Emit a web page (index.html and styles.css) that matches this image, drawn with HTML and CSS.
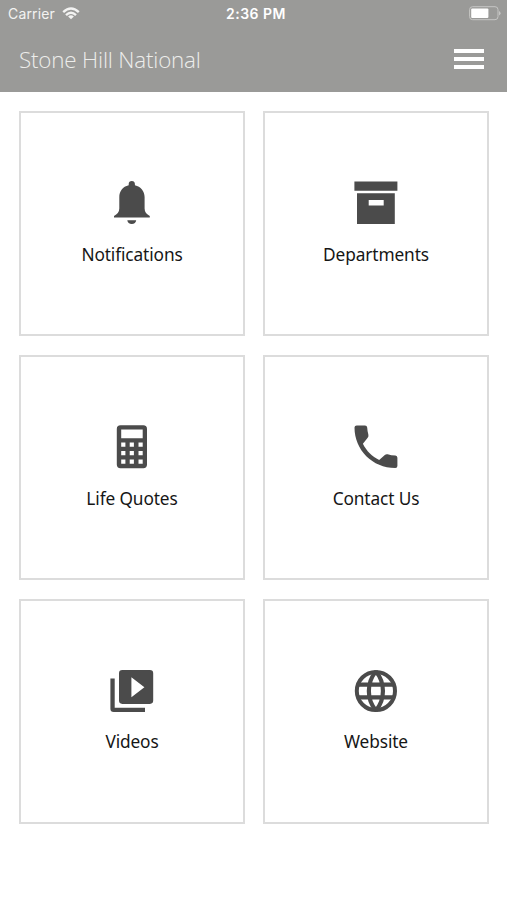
FILE: index.html
```html
<!DOCTYPE html>
<html lang="en">
<head>
<meta charset="utf-8">
<title>Stone Hill National</title>
<link rel="stylesheet" href="styles.css">
</head>
<body>
<header class="header">
  <div class="status">
    <div class="carrier"><span>Carrier</span>
      <svg class="wifi" viewBox="0 0 18 13" width="18" height="13"><g fill="none" stroke="currentColor" stroke-width="2.4"><path d="M1.2 5.1Q9-1.9 16.8 5.1"/><path d="M4 8.1Q9 3.5 14 8.1"/></g><path fill="currentColor" d="M9 12.3 6.1 9.5Q9 7.2 11.9 9.5Z"/></svg>
    </div>
    <div class="time">2:36 PM</div>
    <svg class="battery" viewBox="0 0 32 15" width="32" height="15"><rect x=".6" y=".7" width="28.4" height="13" rx="3" fill="none" stroke="#c6c6c4"/><rect x="2.2" y="2.4" width="17.2" height="9.6" rx="1" fill="#fff"/><path d="M30 5v4.6q1.6-.8 1.6-2.3T30 5Z" fill="#c6c6c4"/></svg>
  </div>
  <div class="bar">
    <h1 class="title">Stone Hill National</h1>
    <div class="menu"><i></i><i></i><i></i></div>
  </div>
</header>
<main class="grid">
  <a class="card">
    <svg class="icon" viewBox="0 0 44 44"><path d="M21.8 0C19.9 0 18.7 1.3 18.7 3.1V4.2C12.8 5.6 9.3 10.2 9.3 16V27.5C9.3 31 7.2 33.2 4 35V36.6H39.8V35C36.6 33.2 34.6 31 34.6 27.5V16C34.6 10.2 30.8 5.6 24.9 4.2V3.1C24.9 1.3 23.7 0 21.8 0ZM17.3 39.2H26.2C26 41.5 24.3 43.1 21.8 43.1S17.5 41.5 17.3 39.2Z"/></svg>
    <span>Notifications</span>
  </a>
  <a class="card">
    <svg class="icon" viewBox="0 0 44 44"><path fill-rule="evenodd" d="M.4.4H43.4V9.7H.4ZM3 12.3H40.8V43.1H3ZM14.7 19V24.4H29.7V19Z"/></svg>
    <span>Departments</span>
  </a>
  <a class="card">
    <svg class="icon" viewBox="0 0 44 44"><path fill-rule="evenodd" d="M10.5.3H33.3Q37 .3 37 4V39.5Q37 43.2 33.3 43.2H10.5Q6.8 43.2 6.8 39.5V4Q6.8.3 10.5.3ZM11.2 4.5V13.3H32.7V4.5ZM11.2 17.6V21.8H15.4V17.6ZM19.7 17.6V21.8H23.9V17.6ZM28.5 17.6V21.8H32.7V17.6ZM11.2 26.1V30.3H15.4V26.1ZM19.7 26.1V30.3H23.9V26.1ZM28.5 26.1V30.3H32.7V26.1ZM11.2 34.6V38.8H15.4V34.6ZM19.7 34.6V38.8H23.9V34.6ZM28.5 34.6V38.8H32.7V34.6Z"/></svg>
    <span>Life Quotes</span>
  </a>
  <a class="card">
    <svg class="icon" viewBox="0 0 44 44"><path d="M2.7.4H11Q13 .4 13.2 2.5Q13.4 6.2 14.3 9.3Q14.9 11.4 13.7 12.8L8.9 18.7C12.5 26 18 31.4 25.2 34.9L30.8 30Q32.1 28.8 33.7 29.3Q37.2 30.4 41.4 30.6Q43.4 30.8 43.4 32.8V41Q43.4 43.1 41.3 43.1C18.5 43.1.5 25.1.5 2.6Q.5.4 2.7.4Z"/></svg>
    <span>Contact Us</span>
  </a>
  <a class="card">
    <svg class="icon" viewBox="0 0 44 44"><path d="M.4 9.4H4.7V38.8H35V43.1H3.7Q.4 43.1.4 39.8Z"/><path fill-rule="evenodd" d="M12.3 1H39.9Q43.2 1 43.2 4.3V31.6Q43.2 34.9 39.9 34.9H12.3Q9 34.9 9 31.6V4.3Q9 1 12.3 1ZM21.4 8.2V28.2L34.4 18.2Z"/></svg>
    <span>Videos</span>
  </a>
  <a class="card">
    <svg class="icon" viewBox="0 0 44 44"><g fill="none" stroke="#4b4b4b" stroke-width="4"><circle cx="21.9" cy="22" r="19.1"/><path stroke-width="4.2" d="M4.3 15.7H39.5M4.3 28.3H39.5M21.9 2.5C12.5 13.5 12.5 30.5 21.9 41.5M21.9 2.5C31.3 13.5 31.3 30.5 21.9 41.5"/></g></svg>
    <span>Website</span>
  </a>
</main>
</body>
</html>
```
FILE: styles.css
```css
* { box-sizing: border-box; }
body { margin: 0; background: #fff; font-family: "Noto Sans", "Open Sans", sans-serif; overflow: hidden; }
.header { height: 92.4px; background: #9a9a98; color: #fff; }
.status { height: 27px; display: grid; grid-template-columns: 1fr auto 1fr; align-items: center; padding: 0 6px 0 8px; font-family: Inter, sans-serif; font-size: 14px; line-height: 27px; }
.carrier { display: flex; align-items: center; gap: 7px; color: #f3f3f2; letter-spacing: .15px; }
.time { font-weight: 600; letter-spacing: .5px; padding-left: 3px; }
.battery { justify-self: end; }
.bar { height: 64px; display: flex; align-items: center; justify-content: space-between; padding: 0 23px 0 19px; }
.title { margin: 0; font-family: "Open Sans", sans-serif; font-size: 22.4px; letter-spacing: -.18px; font-weight: 300; color: #ededeb; white-space: nowrap; }
.menu { display: flex; flex-direction: column; gap: 4px; width: 30px; }
.menu i { height: 4px; background: #fff; }
.grid { display: grid; grid-template-columns: 226px 226px; grid-auto-rows: 225.2px; gap: 18.6px 18px; padding: 18.6px 0 0 19px; }
.card { display: flex; flex-direction: column; align-items: center; padding-top: 68px; border: 2px solid #dcdcdc; color: #161616; font-size: 17.3px; letter-spacing: -.12px; line-height: 24px; }
.icon { width: 44px; height: 44px; fill: #4b4b4b; margin-bottom: 17.8px; flex: none; }
```
